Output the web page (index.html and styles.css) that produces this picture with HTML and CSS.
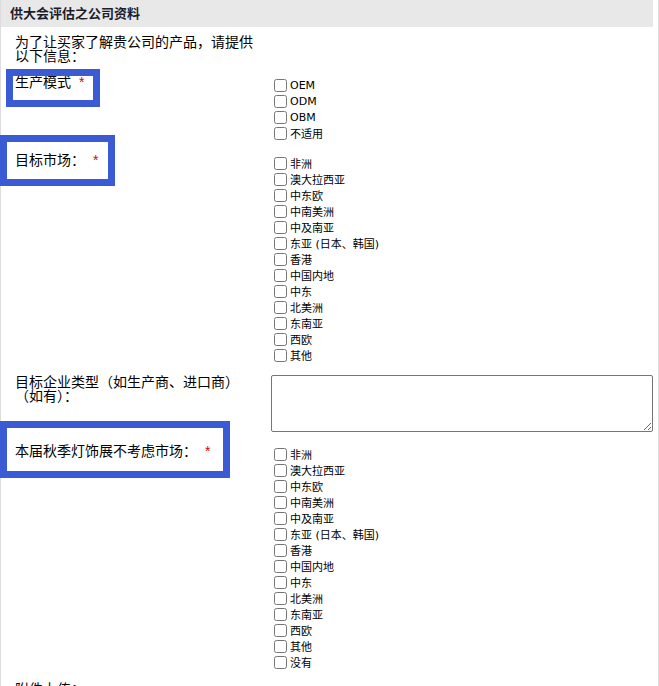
FILE: index.html
```html
<!DOCTYPE html>
<html>

<head>
  <title>供大会评估之公司资料</title>
  <link rel="stylesheet" href="styles.css">
</head>

<body>
  <div class="panel">
    <div class="panel-head">供大会评估之公司资料</div>

    <div class="intro">为了让买家了解贵公司的产品，请提供以下信息：</div>

    <div class="field">
      <div class="label mark mark-1">生产模式 <span class="req">*</span></div>
      <div class="checks">
        <label class="check"><input type="checkbox">OEM</label>
        <label class="check"><input type="checkbox">ODM</label>
        <label class="check"><input type="checkbox">OBM</label>
        <label class="check"><input type="checkbox">不适用</label>
      </div>
    </div>

    <div class="field">
      <div class="label mark mark-2">目标市场： <span class="req">*</span></div>
      <div class="checks">
        <label class="check"><input type="checkbox">非洲</label>
        <label class="check"><input type="checkbox">澳大拉西亚</label>
        <label class="check"><input type="checkbox">中东欧</label>
        <label class="check"><input type="checkbox">中南美洲</label>
        <label class="check"><input type="checkbox">中及南亚</label>
        <label class="check"><input type="checkbox">东亚 (日本、韩国)</label>
        <label class="check"><input type="checkbox">香港</label>
        <label class="check"><input type="checkbox">中国内地</label>
        <label class="check"><input type="checkbox">中东</label>
        <label class="check"><input type="checkbox">北美洲</label>
        <label class="check"><input type="checkbox">东南亚</label>
        <label class="check"><input type="checkbox">西欧</label>
        <label class="check"><input type="checkbox">其他</label>
      </div>
    </div>

    <div class="field">
      <div class="label">目标企业类型（如生产商、进口商）（如有）：</div>
      <div>
        <textarea class="note"></textarea>
      </div>
    </div>

    <div class="field">
      <div class="label mark mark-3">本届秋季灯饰展不考虑市场： <span class="req">*</span></div>
      <div class="checks">
        <label class="check"><input type="checkbox">非洲</label>
        <label class="check"><input type="checkbox">澳大拉西亚</label>
        <label class="check"><input type="checkbox">中东欧</label>
        <label class="check"><input type="checkbox">中南美洲</label>
        <label class="check"><input type="checkbox">中及南亚</label>
        <label class="check"><input type="checkbox">东亚 (日本、韩国)</label>
        <label class="check"><input type="checkbox">香港</label>
        <label class="check"><input type="checkbox">中国内地</label>
        <label class="check"><input type="checkbox">中东</label>
        <label class="check"><input type="checkbox">北美洲</label>
        <label class="check"><input type="checkbox">东南亚</label>
        <label class="check"><input type="checkbox">西欧</label>
        <label class="check"><input type="checkbox">其他</label>
        <label class="check"><input type="checkbox">没有</label>
      </div>
    </div>

    <div class="field">
      <div class="label">附件上传：</div>
      <div></div>
    </div>
  </div>
</body>

</html>
```

FILE: styles.css
```css
body {
  margin: 0;
  font-family: "Liberation Sans", "Noto Sans CJK SC", sans-serif;
  color: #000;
  background: #fff;
}

.panel {
  width: 657px;
  min-height: 686px;
  border-left: 1px solid #dcdcdc;
  border-right: 1px solid #dcdcdc;
}

.panel-head {
  height: 27px;
  margin-right: 5px;
  padding-left: 9px;
  background: #e8e8e8;
  font-size: 13px;
  font-weight: bold;
  line-height: 27px;
  color: #1c1c2c;
}

.intro {
  width: 241px;
  padding: 8px 0 8px 14px;
  font-size: 14px;
  line-height: 14px;
}

.field {
  display: grid;
  grid-template-columns: 269px 382px;
  padding: 4px 0 8px;
}

.label {
  position: relative;
  padding: 0 14px 0 14px;
  font-size: 14px;
  line-height: 14px;
}

.req {
  margin-left: 4px;
  color: #e00000;
  font-size: 14px;
}

.checks {
  display: flex;
  flex-direction: column;
  margin-top: 2px;
}

.check {
  display: flex;
  align-items: center;
  height: 16px;
  font-size: 11px;
  font-family: "DejaVu Sans", "Noto Sans CJK SC", sans-serif;
}

.check input {
  width: 13px;
  height: 13px;
  margin: 0 3px 0 4px;
}

.note {
  display: block;
  box-sizing: border-box;
  width: 382px;
  height: 57px;
  margin: 0 0 0 1px;
  border: 1px solid #767676;
  border-radius: 2px;
}

/* annotation highlight boxes drawn over the labels */
.mark::before {
  content: "";
  position: absolute;
  box-sizing: border-box;
  border: 7px solid #3b5bd5;
  z-index: 2;
}

.mark-1::before {
  left: 5px;
  top: -6px;
  width: 94px;
  height: 38px;
}

.mark-2::before {
  left: -1px;
  top: -18px;
  width: 115px;
  height: 51px;
}

.mark-3::before {
  left: -1px;
  top: -23px;
  width: 230px;
  height: 57px;
}
```
